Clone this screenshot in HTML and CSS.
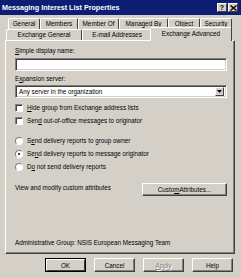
FILE: index.html
```html
<!DOCTYPE html>
<html lang="en">
<head>
    <meta charset="UTF-8">
    <title>Messaging Interest List Properties</title>
    <link rel="stylesheet" href="styles.css">
</head>
<body>
    <div class="window">
        <div class="titlebar">
            <span class="title">Messaging Interest List Properties</span>
            <div class="title-buttons">
                <span class="tbtn">?</span>
                <span class="tbtn">
                    <svg width="7" height="6" viewBox="0 0 7 6"><path d="M0.5 0.5 L6.5 5.5 M6.5 0.5 L0.5 5.5" stroke="#000" stroke-width="1.4"/></svg>
                </span>
            </div>
        </div>

        <div class="tabs">
            <div class="tab-row back">
                <div class="tab tab-general">General</div>
                <div class="tab tab-members">Members</div>
                <div class="tab tab-memberof">Member Of</div>
                <div class="tab tab-managed">Managed By</div>
                <div class="tab tab-object">Object</div>
                <div class="tab tab-security">Security</div>
            </div>
            <div class="tab-row front">
                <div class="tab tab-exgeneral">Exchange General</div>
                <div class="tab tab-email">E-mail Addresses</div>
                <div class="tab tab-advanced selected">Exchange Advanced</div>
            </div>
        </div>

        <div class="panel">
            <div class="label"><u>S</u>imple display name:</div>
            <div class="textbox"></div>

            <div class="label label-gap">E<u>x</u>pansion server:</div>
            <div class="combo">
                <span class="combo-text">Any server in the organization</span>
                <span class="combo-btn">
                    <svg width="5" height="3" viewBox="0 0 5 3"><path d="M0 0 H5 L2.5 3 Z" fill="#000"/></svg>
                </span>
            </div>

            <div class="checks">
                <div class="row"><span class="checkbox"></span><span><u>H</u>ide group from Exchange address lists</span></div>
                <div class="row"><span class="checkbox"></span><span>Sen<u>d</u> out-of-office messages to originator</span></div>
            </div>

            <div class="radios">
                <div class="row"><span class="radio"></span><span>S<u>e</u>nd delivery reports to group owner</span></div>
                <div class="row"><span class="radio checked"></span><span>Se<u>n</u>d delivery reports to message originator</span></div>
                <div class="row"><span class="radio"></span><span>D<u>o</u> not send delivery reports</span></div>
            </div>

            <div class="custom-row">
                <span class="custom-text">View and modify custom attributes</span>
                <span class="button custom-btn">Custo<u>m</u> Attributes...</span>
            </div>

            <div class="admin">Administrative Group: NSIS European Messaging Team</div>
        </div>

        <div class="buttons">
            <span class="button default"><span class="button-inner">OK</span></span>
            <span class="button">Cancel</span>
            <span class="button disabled"><u>A</u>pply</span>
            <span class="button">Help</span>
        </div>
    </div>
</body>
</html>
```

FILE: styles.css
```css
:root {
    --face: #d4d0c8;
    --shadow: #808080;
    --dark: #404040;
    --light: #ffffff;
    --title: #0c1f74;
}
body {
    margin: 0;
    padding: 0;
    background-color: var(--face);
    font-family: 'Liberation Sans', Arial, sans-serif;
    font-size: 6.3px;
    color: #000;
}
u {
    text-decoration: underline;
    text-underline-offset: 1px;
}
.window {
    width: 241px;
    height: 278px;
    background-color: var(--face);
    display: flex;
    flex-direction: column;
    overflow: hidden;
}
.titlebar {
    height: 15px;
    background-color: var(--title);
    color: white;
    display: flex;
    align-items: center;
    justify-content: space-between;
    padding: 0 3px 0 2px;
}
.title {
    font-weight: bold;
    font-size: 7.2px;
}
.title-buttons {
    display: flex;
    gap: 1px;
}
.tbtn {
    width: 8px;
    height: 7px;
    background-color: var(--face);
    border: 1px solid;
    border-color: var(--light) var(--dark) var(--dark) var(--light);
    display: flex;
    align-items: center;
    justify-content: center;
    color: #000;
    font-weight: bold;
    font-size: 7px;
    line-height: 7px;
}
.tabs {
    margin-top: 3px;
}
.tab-row {
    display: flex;
    height: 11px;
    align-items: flex-end;
}
.tab-row.back {
    margin-left: 8px;
}
.tab-row.front {
    margin-left: 6px;
}
.tab {
    box-sizing: border-box;
    height: 11px;
    border-top: 1px solid var(--light);
    border-left: 1px solid var(--light);
    border-right: 1px solid var(--dark);
    border-radius: 2px 2px 0 0;
    text-align: center;
    line-height: 10px;
    font-size: 6.4px;
    background-color: var(--face);
    white-space: nowrap;
}
.tab-general { width: 32px; }
.tab-members { width: 38px; }
.tab-memberof { width: 41px; }
.tab-managed { width: 49px; }
.tab-object { width: 32px; }
.tab-security { width: 32px; }
.tab-exgeneral { width: 76px; }
.tab-email { width: 70px; }
.tab-advanced { width: 82px; }
.tab.selected {
    height: 14px;
    margin: 0 0 -1px -2px;
    position: relative;
    z-index: 1;
    line-height: 12px;
}
.panel {
    box-sizing: border-box;
    width: 230px;
    height: 214px;
    margin-left: 5px;
    border: 1px solid;
    border-color: var(--light) var(--dark) var(--dark) var(--light);
    box-shadow: inset -1px -1px 0 var(--shadow);
    padding: 6px 7px 6px 9px;
    display: flex;
    flex-direction: column;
}
.label {
    line-height: 8px;
    height: 8px;
}
.label-gap {
    margin-top: 4px;
}
.textbox {
    box-sizing: border-box;
    height: 13px;
    margin-top: 3px;
    background: white;
    border: 1px solid;
    border-color: var(--shadow) var(--light) var(--light) var(--shadow);
    box-shadow: inset 1px 1px 0 var(--dark), inset -1px -1px 0 var(--face);
}
.combo {
    box-sizing: border-box;
    height: 13px;
    margin-top: 2px;
    background: white;
    border: 1px solid;
    border-color: var(--shadow) var(--light) var(--light) var(--shadow);
    box-shadow: inset 1px 1px 0 var(--dark), inset -1px -1px 0 var(--face);
    display: flex;
    align-items: center;
    justify-content: space-between;
    padding: 2px;
}
.combo-text {
    padding-left: 1px;
}
.combo-btn {
    box-sizing: border-box;
    width: 9px;
    height: 9px;
    background-color: var(--face);
    border: 1px solid;
    border-color: var(--light) var(--dark) var(--dark) var(--light);
    display: flex;
    align-items: center;
    justify-content: center;
}
.checks {
    margin-top: 3px;
}
.radios {
    margin-top: 7px;
}
.row {
    height: 13px;
    display: flex;
    align-items: center;
    gap: 4px;
}
.checkbox {
    box-sizing: border-box;
    width: 8px;
    height: 8px;
    background: white;
    border: 1px solid;
    border-color: var(--shadow) var(--light) var(--light) var(--shadow);
    box-shadow: inset 1px 1px 0 var(--dark);
}
.radio {
    box-sizing: border-box;
    width: 8px;
    height: 8px;
    border-radius: 50%;
    background: white;
    border: 1px solid;
    border-color: var(--shadow) var(--light) var(--light) var(--shadow);
    display: flex;
    align-items: center;
    justify-content: center;
}
.radio.checked::after {
    content: "";
    width: 2px;
    height: 2px;
    border-radius: 50%;
    background: #000;
}
.custom-row {
    margin-top: 10px;
    display: flex;
    justify-content: space-between;
    align-items: flex-start;
}
.custom-text {
    padding-top: 1px;
}
.button {
    box-sizing: border-box;
    width: 41px;
    height: 14px;
    background-color: var(--face);
    border: 1px solid;
    border-color: var(--light) var(--dark) var(--dark) var(--light);
    box-shadow: inset -1px -1px 0 var(--shadow);
    display: flex;
    align-items: center;
    justify-content: center;
    white-space: nowrap;
}
.custom-btn {
    width: 85px;
    height: 13px;
}
.admin {
    margin-top: auto;
    line-height: 8px;
}
.buttons {
    margin-top: 4px;
    display: flex;
    justify-content: flex-end;
    gap: 8px;
    padding-right: 8px;
}
.button.default {
    border: 1px solid #000;
    box-shadow: none;
    padding: 0;
}
.button-inner {
    box-sizing: border-box;
    width: 100%;
    height: 100%;
    border: 1px solid;
    border-color: var(--light) var(--dark) var(--dark) var(--light);
    display: flex;
    align-items: center;
    justify-content: center;
}
.button.disabled {
    color: var(--shadow);
    text-shadow: 1px 1px 0 var(--light);
}
```
